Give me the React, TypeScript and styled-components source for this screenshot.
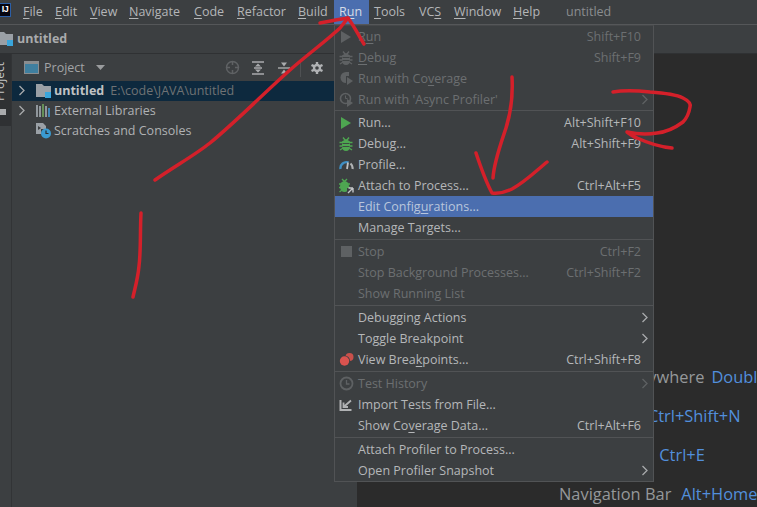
import React from 'react';
import styled, { createGlobalStyle } from 'styled-components';

const Global = createGlobalStyle`
  html, body { margin: 0; padding: 0; background: #3c3f41; }
  #root { width: 757px; height: 507px; overflow: hidden; }
`;

const Page = styled.div`
  position: relative;
  width: 757px;
  height: 507px;
  overflow: hidden;
  display: flex;
  flex-direction: column;
  background: #3c3f41;
  color: #bbbbbb;
  font-family: "Open Sans", "Noto Sans", sans-serif;
  font-size: 12.5px;
`;

const MenuBar = styled.div`
  flex: 0 0 24px;
  display: flex;
  align-items: center;
  border-bottom: 1px solid #555759;
  white-space: nowrap;
`;
const Logo = styled.div`
  width: 11px;
  height: 14px;
  margin: -4px 12px 0 0;
  box-sizing: border-box;
  background: #050510;
  border: 1px solid #2b5fa8;
  border-left: 0;
  color: #fff;
  font: bold 9px/11px "Liberation Sans", sans-serif;
  letter-spacing: -0.5px;
  text-align: center;
  overflow: hidden;
`;
const MenuTitle = styled.div<{ $w: number; $active?: boolean; $after?: number }>`
  width: ${p => p.$w}px;
  height: 24px;
  line-height: 23px;
  box-sizing: border-box;
  margin-right: ${p => p.$after ?? 0}px;
  padding-left: ${p => (p.$active ? 5 : 0)}px;
  background: ${p => (p.$active ? '#4b6eaf' : 'transparent')};
  color: ${p => (p.$active ? '#d5dbe6' : '#b4b6b8')};
  u { text-underline-offset: 2px; text-decoration-thickness: 1px; }
`;
const WindowTitle = styled.div`
  color: #8a8d8f;
  padding-bottom: 2px;
`;

const NavBar = styled.div`
  flex: 0 0 29px;
  display: flex;
  align-items: center;
  gap: 3px;
  padding-bottom: 1px;
  box-sizing: border-box;
  border-bottom: 1px solid #2f3133;
  font-weight: 700;
  color: #a9abad;
`;

const Body = styled.div`
  flex: 1;
  min-height: 0;
  display: flex;
`;
const ToolStrip = styled.div`
  flex: 0 0 11px;
  height: 72px;
  background: #2f3133;
  color: #b8b8b8;
  overflow: hidden;
  display: flex;
  flex-direction: column;
  align-items: flex-end;
  font-size: 12px;
`;
const StripLabel = styled.div`
  flex: 0 0 40px;
  writing-mode: vertical-rl;
  transform: rotate(180deg);
  width: 14px;
  margin: 7px 4px 0 0;
  line-height: 14px;
  color: #c4c4c4;
`;
const StripFolder = styled.div`
  width: 6px;
  height: 6px;
  margin: 8px 5px 0 0;
  background: #a9abad;
`;
const ProjectPanel = styled.div`
  flex: 0 0 346px;
  border-left: 1px solid #323436;
  box-sizing: border-box;
`;
const PanelHeader = styled.div`
  height: 27px;
  display: flex;
  align-items: center;
  padding-left: 12px;
  color: #a2a4a6;
`;
const HeaderIcons = styled.div`
  display: flex;
  align-items: center;
  margin-left: auto;
  margin-right: 27px;
`;
const HeaderButton = styled.div`
  width: 26px;
  display: flex;
  justify-content: center;
`;
const HeaderDivider = styled.div`
  width: 1px;
  height: 18px;
  background: #4f5153;
  margin: 0 3px 0 3px;
`;
const TreeRow = styled.div<{ $selected?: boolean }>`
  height: 20px;
  box-sizing: border-box;
  padding: 0 0 1px 6px;
  display: flex;
  align-items: center;
  background: ${p => (p.$selected ? '#0d293e' : 'transparent')};
  white-space: nowrap;
  color: #b0b2b4;
`;
const TreeChevron = styled.div`
  width: 18px;
  display: flex;
`;
const TreeIcon = styled.div`
  width: 18px;
  display: flex;
`;
const TreeName = styled.span<{ $bold?: boolean }>`
  font-weight: ${p => (p.$bold ? 700 : 400)};
  color: ${p => (p.$bold ? '#c0c2c4' : '#b0b2b4')};
`;
const TreePath = styled.span`
  margin-left: 6px;
  color: #6f7274;
`;
const Editor = styled.div`
  flex: 1;
  min-width: 0;
  background: #2b2b2b;
  padding: 312px 0 0 202px;
  overflow: hidden;
  font-size: 16.4px;
`;
const Hint = styled.div<{ $gap: number }>`
  height: 39px;
  display: flex;
  gap: ${p => p.$gap}px;
  white-space: nowrap;
  color: #95989a;
  line-height: 22px;
`;
const Key = styled.span`
  color: #528fdc;
`;

const Menu = styled.div`
  position: absolute;
  left: 334px;
  top: 25px;
  width: 320px;
  box-sizing: border-box;
  background: #3c3f41;
  border: 1px solid #515355;
  border-top-color: #46484a;
  color: #b5b7b9;
`;
const Item = styled.div<{ $disabled?: boolean; $active?: boolean }>`
  height: 21px;
  display: flex;
  align-items: center;
  padding: 0 12px 0 3px;
  background: ${p => (p.$active ? '#4b6eaf' : 'transparent')};
  color: ${p => (p.$disabled ? '#6c6f71' : p.$active ? '#b9c6dc' : '#b5b7b9')};
  white-space: nowrap;
  u { text-underline-offset: 2px; text-decoration-thickness: 1px; }
`;
const ItemIcon = styled.div`
  flex: 0 0 16px;
  height: 16px;
  margin-right: 4px;
  display: flex;
  align-items: center;
  justify-content: center;
`;
const ItemLabel = styled.div`
  flex: 1;
`;
const Shortcut = styled.div<{ $disabled?: boolean }>`
  color: ${p => (p.$disabled ? '#6c6f71' : '#b5b7b9')};
`;
const Arrow = styled.div`
  margin-right: -8px;
  display: flex;
`;
const Separator = styled.div<{ $tight?: boolean }>`
  height: 1px;
  margin: ${p => (p.$tight ? 0 : 1)}px 0 1px;
  background: #515355;
`;

const Scribble = styled.svg`
  position: absolute;
  left: 0;
  top: 0;
  pointer-events: none;
`;

const Folder = ({ x = 0 }: { x?: number }) => (
  <svg width="16" height="15" viewBox="0 0 16 15" style={{ marginLeft: x }}>
    <path d="M0 1h6l2 2h7v7H9v4H0z" fill="#9aa0a6" />
    <rect x="9" y="9" width="6" height="6" fill="#3aa6dc" />
  </svg>
);
const Chevron = ({ c = '#a8aaac' }: { c?: string }) => (
  <svg width="8" height="11" viewBox="0 0 8 11">
    <path d="M1.5 1l4.5 4.5L1.5 10" fill="none" stroke={c} strokeWidth="1.3" />
  </svg>
);
const Play = ({ c }: { c: string }) => (
  <svg width="14" height="14" viewBox="0 0 14 14"><path d="M2 1l10 6-10 6z" fill={c} /></svg>
);
const Bug = ({ c }: { c: string }) => (
  <svg width="14" height="14" viewBox="0 0 14 14">
    <path d="M4 0.5l2 2.5h2l2-2.5M0.5 5.5h13M0.5 9h13M1 13l3-2M13 13l-3-2" stroke={c} strokeWidth="1.4" fill="none" />
    <path d="M3 4.5Q7 1 11 4.5V9Q11 14 7 14 3 14 3 9z" fill={c} />
    <path d="M3.5 6.5h7M3.5 9.5h7" stroke="#3c3f41" strokeWidth=".9" />
  </svg>
);

const Crosshair = () => (
  <svg width="15" height="15" viewBox="0 0 15 15">
    <circle cx="7.5" cy="7.5" r="6" fill="none" stroke="#5f6264" strokeWidth="1.5" />
    <path d="M7.5 1v4M7.5 10v4M1 7.5h4M10 7.5h4" stroke="#5f6264" strokeWidth="1.5" />
  </svg>
);
const ExpandAll = () => (
  <svg width="14" height="14" viewBox="0 0 14 14">
    <path d="M1 1h12M1 13h12M3 7h8" stroke="#a9abad" strokeWidth="1.4" />
    <path d="M7 2.5L10 5.5H4zM7 11.5L4 8.5h6z" fill="#a9abad" />
  </svg>
);
const CollapseAll = () => (
  <svg width="14" height="14" viewBox="0 0 14 14">
    <path d="M1 7h12" stroke="#a9abad" strokeWidth="1.4" />
    <path d="M7 5.5L4 1.5h6zM7 8.5l3 4H4z" fill="#a9abad" />
  </svg>
);
const Gear = () => (
  <svg width="14" height="14" viewBox="0 0 14 14">
    <path d="M7 2.8a4.2 4.2 0 1 0 0 8.4 4.2 4.2 0 0 0 0-8.4zm0 2.4a1.8 1.8 0 1 1 0 3.6 1.8 1.8 0 0 1 0-3.6z" fill="#b0b2b4" fillRule="evenodd" />
    <path d="M7 1v3M7 10v3M1.5 4l2.5 1.2M10 8.8l2.5 1.2M12.5 4L10 5.2M4 8.8L1.5 10" stroke="#b0b2b4" strokeWidth="2.4" />
  </svg>
);

type Row = {
  label: React.ReactNode;
  icon?: React.ReactNode;
  key2?: string;
  disabled?: boolean;
  active?: boolean;
  sub?: boolean;
};

const D = '#5e6163';
const groups: Row[][] = [
  [
    { label: <>R<u>u</u>n</>, icon: <Play c={D} />, key2: 'Shift+F10', disabled: true },
    { label: <><u>D</u>ebug</>, icon: <Bug c={D} />, key2: 'Shift+F9', disabled: true },
    {
      label: <>Run with Co<u>v</u>erage</>,
      icon: (
        <svg width="15" height="15" viewBox="0 0 15 15">
          <path d="M7 1a5.5 5.5 0 1 0 0 11z" fill={D} />
          <path d="M7 1h3v4H7z" fill={D} />
          <path d="M8 6l6 4-6 4z" fill={D} />
        </svg>
      ),
      disabled: true,
    },
    {
      label: "Run with 'Async Profiler'",
      icon: (
        <svg width="15" height="15" viewBox="0 0 15 15">
          <circle cx="6.5" cy="6.5" r="5" fill="none" stroke={D} strokeWidth="1.6" />
          <path d="M6.5 3.5v3h2" fill="none" stroke={D} />
          <path d="M8 7l6 4-6 4z" fill={D} />
        </svg>
      ),
      disabled: true,
      sub: true,
    },
  ],
  [
    { label: 'Run...', icon: <Play c="#4ea651" />, key2: 'Alt+Shift+F10' },
    { label: 'Debug...', icon: <Bug c="#4ea651" />, key2: 'Alt+Shift+F9' },
    {
      label: 'Profile...',
      icon: (
        <svg width="15" height="13" viewBox="0 0 15 13">
          <path d="M1.5 11a6 6 0 0 1 8-6.5" fill="none" stroke="#3f8fc4" strokeWidth="2.4" />
          <path d="M9 4.5L8 11" stroke="#c0c2c4" strokeWidth="1.8" />
          <path d="M11.5 5.5a6 6 0 0 1 2 5.5" fill="none" stroke="#b0b2b4" strokeWidth="2.2" />
        </svg>
      ),
    },
    {
      label: 'Attach to Process...',
      icon: (
        <svg width="16" height="16" viewBox="0 0 16 16">
          <path d="M4 1l2 2h1l2-2M1 6h11M1 9.5h11M1.5 14L4 12" stroke="#4ea651" strokeWidth="1.4" fill="none" />
          <ellipse cx="6.5" cy="8.5" rx="4.5" ry="5.5" fill="#4ea651" />
          <path d="M9 10h7v6H9z" fill="#3c3f41" />
          <path d="M15 10v4.5M15 10h-4.5M14.5 10.5L10 15" stroke="#c4c6c8" strokeWidth="1.4" fill="none" />
        </svg>
      ),
      key2: 'Ctrl+Alt+F5',
    },
    { label: <>Edit Config<u>u</u>rations...</>, active: true },
    { label: 'Manage Targets...' },
  ],
  [
    { label: 'Stop', icon: <svg width="11" height="11"><rect width="11" height="11" fill={D} /></svg>, key2: 'Ctrl+F2', disabled: true },
    { label: 'Stop Background Processes...', key2: 'Ctrl+Shift+F2', disabled: true },
    { label: 'Show Running List', disabled: true },
  ],
  [
    { label: 'Debugging Actions', sub: true },
    { label: 'Toggle Breakpoint', sub: true },
    {
      label: <>View Brea<u>k</u>points...</>,
      icon: (
        <svg width="15" height="14" viewBox="0 0 15 14">
          <circle cx="10.5" cy="4" r="4" fill="#c9504b" />
          <circle cx="5.5" cy="8" r="5.5" fill="#3c3f41" />
          <circle cx="5.5" cy="8" r="4.7" fill="#d9534f" />
        </svg>
      ),
      key2: 'Ctrl+Shift+F8',
    },
  ],
  [
    {
      label: 'Test History',
      icon: (
        <svg width="15" height="15" viewBox="0 0 15 15">
          <circle cx="7.5" cy="7.5" r="6" fill="none" stroke={D} strokeWidth="1.8" />
          <path d="M7.5 4v4h3" fill="none" stroke={D} strokeWidth="1.3" />
        </svg>
      ),
      disabled: true,
      sub: true,
    },
    {
      label: 'Import Tests from File...',
      icon: (
        <svg width="14" height="14" viewBox="0 0 14 14">
          <path d="M1.5 2v10h11" fill="none" stroke="#b0b2b4" strokeWidth="2" />
          <path d="M4.5 9L12 2.5M4.5 4.5V9H9" fill="none" stroke="#b0b2b4" strokeWidth="1.8" />
        </svg>
      ),
    },
    { label: <>Show Co<u>v</u>erage Data...</>, key2: 'Ctrl+Alt+F6' },
  ],
  [
    { label: 'Attach Profiler to Process...' },
    { label: 'Open Profiler Snapshot', sub: true },
  ],
];

const strokes = [
  'M155 180C175 166 195 155 210 143C240 118 265 92 290 70C308 54 325 42 340 28L348 18',
  'M320 23C330 21 340 19 348 18C354 26 359 36 364 44',
  'M141 213C140 232 141 250 139 266C138 278 135 288 133 297',
  'M512 77C513 95 511 112 506 128C500 146 494 162 493 178',
  'M476 153C481 168 486 182 492 193C500 194 506 192 512 189C525 182 536 171 547 162',
  'M613 92C625 90 640 91 650 92C665 93 677 95 683 98C689 101 691 104 690 107C689 113 687 118 683 122C675 128 666 132 657 133C646 135 636 134 627 132C631 135 634 137 637 138C648 143 660 147 672 148',
];

export default function App() {
  return (
    <Page>
      <Global />
      <MenuBar>
        <Logo>IJ</Logo>
        <MenuTitle $w={32}><u>F</u>ile</MenuTitle>
        <MenuTitle $w={35}><u>E</u>dit</MenuTitle>
        <MenuTitle $w={39}><u>V</u>iew</MenuTitle>
        <MenuTitle $w={65}><u>N</u>avigate</MenuTitle>
        <MenuTitle $w={43}><u>C</u>ode</MenuTitle>
        <MenuTitle $w={61}><u>R</u>efactor</MenuTitle>
        <MenuTitle $w={36}><u>B</u>uild</MenuTitle>
        <MenuTitle $w={35} $active $after={5}>R<u>u</u>n</MenuTitle>
        <MenuTitle $w={45}><u>T</u>ools</MenuTitle>
        <MenuTitle $w={35}>VC<u>S</u></MenuTitle>
        <MenuTitle $w={59}><u>W</u>indow</MenuTitle>
        <MenuTitle $w={53}><u>H</u>elp</MenuTitle>
        <WindowTitle>untitled</WindowTitle>
      </MenuBar>
      <NavBar>
        <Folder x={-2} />
        untitled
      </NavBar>
      <Body>
        <ToolStrip>
          <StripLabel>Project</StripLabel>
          <StripFolder />
        </ToolStrip>
        <ProjectPanel>
          <PanelHeader>
            <svg width="15" height="13" viewBox="0 0 15 13" style={{ marginRight: 5 }}>
              <rect x=".5" y=".5" width="14" height="12" fill="#3f7f9f" stroke="#8a8d8f" />
              <rect x="1" y="1" width="13" height="2" fill="#8a8d8f" />
            </svg>
            Project
            <svg width="9" height="5" viewBox="0 0 9 5" style={{ marginLeft: 11 }}>
              <path d="M0 0h9L4.5 5z" fill="#9a9c9e" />
            </svg>
            <HeaderIcons>
              <HeaderButton><Crosshair /></HeaderButton>
              <HeaderButton><ExpandAll /></HeaderButton>
              <HeaderButton><CollapseAll /></HeaderButton>
              <HeaderDivider />
              <HeaderButton><Gear /></HeaderButton>
            </HeaderIcons>
          </PanelHeader>
          <TreeRow $selected>
            <TreeChevron><Chevron /></TreeChevron>
            <TreeIcon><Folder /></TreeIcon>
            <TreeName $bold>untitled</TreeName>
            <TreePath>E:\code\JAVA\untitled</TreePath>
          </TreeRow>
          <TreeRow>
            <TreeChevron><Chevron /></TreeChevron>
            <TreeIcon>
              <svg width="15" height="13" viewBox="0 0 15 13">
                <path d="M1 1v12M4 2v11" stroke="#9aa0a6" strokeWidth="1.8" />
                <path d="M7 0v13" stroke="#6a9a5b" strokeWidth="1.8" />
                <path d="M10 2v11" stroke="#9aa0a6" strokeWidth="1.8" />
                <path d="M13 4v9" stroke="#3f8fc4" strokeWidth="1.8" />
              </svg>
            </TreeIcon>
            <TreeName>External Libraries</TreeName>
          </TreeRow>
          <TreeRow>
            <TreeChevron />
            <TreeIcon>
              <svg width="16" height="16" viewBox="0 0 16 16">
                <path d="M0 0h7l3 3v3H5v5H0z" fill="#9aa0a6" />
                <path d="M2 3l3 2-3 2z" fill="#3c3f41" />
                <circle cx="10" cy="10.5" r="5" fill="#3a9ad0" />
                <path d="M10 7.5v3h2.5" fill="none" stroke="#2b2b2b" strokeWidth="1.2" />
              </svg>
            </TreeIcon>
            <TreeName>Scratches and Consoles</TreeName>
          </TreeRow>
        </ProjectPanel>
        <Editor>
          <Hint $gap={7}>Search Everywhere <Key>Double Shift</Key></Hint>
          <Hint $gap={17}>Go to File <Key>Ctrl+Shift+N</Key></Hint>
          <Hint $gap={10}>Recent Files <Key>Ctrl+E</Key></Hint>
          <Hint $gap={10}>Navigation Bar <Key>Alt+Home</Key></Hint>
        </Editor>
      </Body>
      <Menu>
        {groups.map((g, i) => (
          <React.Fragment key={i}>
            {i > 0 && <Separator $tight={i === 1} />}
            {g.map((r, j) => (
              <Item key={j} $disabled={r.disabled} $active={r.active}>
                <ItemIcon>{r.icon}</ItemIcon>
                <ItemLabel>{r.label}</ItemLabel>
                {r.key2 && <Shortcut $disabled={r.disabled}>{r.key2}</Shortcut>}
                {r.sub && <Arrow><Chevron c={r.disabled ? '#5e6163' : '#a8aaac'} /></Arrow>}
              </Item>
            ))}
          </React.Fragment>
        ))}
      </Menu>
      <Scribble width="757" height="507" viewBox="0 0 757 507">
        {strokes.map((d, i) => (
          <path key={i} d={d} fill="none" stroke="#d4202a" strokeWidth="3.5" strokeLinecap="round" strokeLinejoin="round" />
        ))}
      </Scribble>
    </Page>
  );
}
